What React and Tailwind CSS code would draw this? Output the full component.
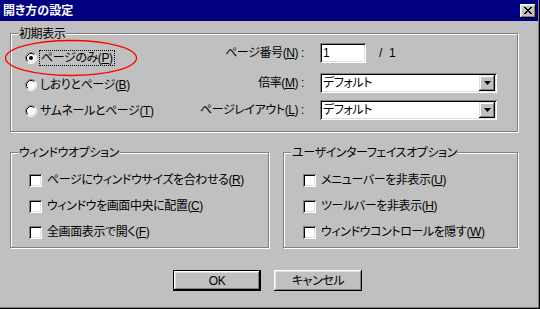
import React from 'react';

// Win98 style "開き方の設定" dialog

const Mn = ({ children }) => <u className="underline underline-offset-[1px]">{children}</u>;

const Radio = ({ checked }) => (
  <svg width="12" height="12" viewBox="0 0 12 12" className="shrink-0">
    <circle cx="6" cy="6" r="5" fill="#ffffff" />
    <path d="M2.11 9.89 A5.5 5.5 0 0 1 9.89 2.11" fill="none" stroke="#808080" />
    <path d="M9.89 2.11 A5.5 5.5 0 0 1 2.11 9.89" fill="none" stroke="#ffffff" />
    <path d="M2.82 9.18 A4.5 4.5 0 0 1 9.18 2.82" fill="none" stroke="#000000" />
    <path d="M9.18 2.82 A4.5 4.5 0 0 1 2.82 9.18" fill="none" stroke="#dfdfdf" />
    {checked && <circle cx="6" cy="6" r="2" fill="#000000" />}
  </svg>
);

const CheckBox = () => (
  <div className="w-[13px] h-[13px] shrink-0 bg-white shadow-[inset_1px_1px_0_#808080,inset_-1px_-1px_0_#ffffff,inset_2px_2px_0_#000000,inset_-2px_-2px_0_#dfdfdf]"></div>
);

const Group = ({ label, className, children }) => (
  <div className={`relative border border-[#808080] shadow-[inset_1px_1px_0_#ffffff,1px_1px_0_#ffffff] ${className}`}>
    <span className="absolute -top-[8px] left-[7px] px-[1px] bg-[#c0c0c0] leading-[16px] whitespace-nowrap">{label}</span>
    {children}
  </div>
);

const Combo = ({ value }) => (
  <div className="w-[177px] h-[20px] bg-white flex items-center p-[2px] shadow-[inset_1px_1px_0_#808080,inset_-1px_-1px_0_#ffffff,inset_2px_2px_0_#000000,inset_-2px_-2px_0_#dfdfdf]">
    <span className="flex-1 pl-[1px] leading-[16px]">{value}</span>
    <div className="w-[16px] h-[16px] bg-[#c0c0c0] flex items-center justify-center shadow-[inset_-1px_-1px_0_#000000,inset_1px_1px_0_#dfdfdf,inset_-2px_-2px_0_#808080,inset_2px_2px_0_#ffffff]">
      <svg width="7" height="4" viewBox="0 0 7 4"><path d="M0 0h7L3.5 4z" fill="#000000" /></svg>
    </div>
  </div>
);

const CheckRow = ({ children }) => (
  <div className="flex items-center h-[16px] gap-[5px]">
    <CheckBox />
    <span className="leading-[16px] whitespace-nowrap">{children}</span>
  </div>
);

export default function App() {
  return (
    <div className="relative w-[540px] h-[309px] bg-[#c0c0c0] border-r border-b border-black text-black text-[12px] tracking-[-0.4px] font-['Liberation_Sans','Noto_Sans_CJK_JP',sans-serif] [font-feature-settings:'palt']">
      <div className="h-full border-r border-b border-[#808080] flex flex-col">
        {/* title bar */}
        <div className="h-[21px] bg-[#000080] flex items-center justify-between pl-[3px] pr-[2px]">
          <span className="text-white font-bold text-[12px] leading-none tracking-normal">開き方の設定</span>
          <div className="w-[16px] h-[14px] bg-[#c0c0c0] flex items-center justify-center shadow-[inset_-1px_-1px_0_#000000,inset_1px_1px_0_#ffffff,inset_-2px_-2px_0_#808080,inset_2px_2px_0_#dfdfdf]">
            <svg width="8" height="7" viewBox="0 0 8 7" shapeRendering="crispEdges" fill="#000000">
              <rect x="0" y="0" width="2" height="1" /><rect x="6" y="0" width="2" height="1" />
              <rect x="1" y="1" width="2" height="1" /><rect x="5" y="1" width="2" height="1" />
              <rect x="2" y="2" width="4" height="1" />
              <rect x="3" y="3" width="2" height="1" />
              <rect x="2" y="4" width="4" height="1" />
              <rect x="1" y="5" width="2" height="1" /><rect x="5" y="5" width="2" height="1" />
              <rect x="0" y="6" width="2" height="1" /><rect x="6" y="6" width="2" height="1" />
            </svg>
          </div>
        </div>

        {/* body */}
        <div className="pl-[10px] pt-[12px] flex flex-col">
          <Group label="初期表示" className="w-[508px] h-[99px] flex">
            <div className="w-[179px] pl-[14px] pt-[16px] flex flex-col">
              <div className="flex items-center h-[16px] gap-[2px]">
                <Radio checked />
                <span className="border border-dotted border-black px-[1px] leading-[14px] whitespace-nowrap">ページのみ(<Mn>P</Mn>)</span>
              </div>
              <div className="flex items-center h-[16px] gap-[3px] mt-[11px]">
                <Radio />
                <span className="leading-[16px] whitespace-nowrap">しおりとページ(<Mn>B</Mn>)</span>
              </div>
              <div className="flex items-center h-[16px] gap-[3px] mt-[10px]">
                <Radio />
                <span className="leading-[16px] whitespace-nowrap">サムネールとページ(<Mn>T</Mn>)</span>
              </div>
            </div>
            <div className="pt-[9px] flex flex-col">
              <div className="flex items-center h-[20px]">
                <span className="w-[114px] text-right whitespace-nowrap">ページ番号(<Mn>N</Mn>) :</span>
                <div className="ml-[16px] w-[46px] h-[20px] bg-white flex items-center pl-[3px] shadow-[inset_1px_1px_0_#808080,inset_-1px_-1px_0_#ffffff,inset_2px_2px_0_#000000,inset_-2px_-2px_0_#dfdfdf]">1</div>
                <span className="ml-[13px]">/</span>
                <span className="ml-[7px]">1</span>
              </div>
              <div className="flex items-center h-[20px] mt-[10px]">
                <span className="w-[114px] text-right whitespace-nowrap">倍率(<Mn>M</Mn>) :</span>
                <div className="ml-[16px]"><Combo value="デフォルト" /></div>
              </div>
              <div className="flex items-center h-[20px] mt-[7px]">
                <span className="w-[114px] text-right whitespace-nowrap">ページレイアウト(<Mn>L</Mn>) :</span>
                <div className="ml-[16px]"><Combo value="デフォルト" /></div>
              </div>
            </div>
          </Group>

          <div className="flex gap-[14px] mt-[20px]">
            <Group label="ウィンドウオプション" className="w-[259px] h-[96px] pl-[18px] pt-[19px] flex flex-col gap-[10px]">
              <CheckRow>ページにウィンドウサイズを合わせる(<Mn>R</Mn>)</CheckRow>
              <CheckRow>ウィンドウを画面中央に配置(<Mn>C</Mn>)</CheckRow>
              <CheckRow>全画面表示で開く(<Mn>F</Mn>)</CheckRow>
            </Group>
            <Group label="ユーザインターフェイスオプション" className="w-[235px] h-[96px] pl-[19px] pt-[19px] flex flex-col gap-[10px]">
              <CheckRow>メニューバーを非表示(<Mn>U</Mn>)</CheckRow>
              <CheckRow>ツールバーを非表示(<Mn>H</Mn>)</CheckRow>
              <CheckRow>ウィンドウコントロールを隠す(<Mn>W</Mn>)</CheckRow>
            </Group>
          </div>

          <div className="flex gap-[13px] mt-[22px] ml-[163px]">
            <button className="w-[88px] h-[21px] border border-black bg-[#c0c0c0] flex items-center justify-center shadow-[inset_-1px_-1px_0_#000000,inset_1px_1px_0_#ffffff,inset_-2px_-2px_0_#808080,inset_2px_2px_0_#dfdfdf]">OK</button>
            <button className="w-[88px] h-[21px] bg-[#c0c0c0] flex items-center justify-center shadow-[inset_-1px_-1px_0_#000000,inset_1px_1px_0_#ffffff,inset_-2px_-2px_0_#808080,inset_2px_2px_0_#dfdfdf]">キャンセル</button>
          </div>
        </div>
      </div>

      {/* red annotation ellipse */}
      <svg className="absolute left-[4px] top-[39px] pointer-events-none" width="134" height="38" viewBox="0 0 134 38">
        <ellipse cx="67" cy="19" rx="65.5" ry="17.5" fill="none" stroke="#ff0000" strokeWidth="1.3" />
      </svg>
    </div>
  );
}
